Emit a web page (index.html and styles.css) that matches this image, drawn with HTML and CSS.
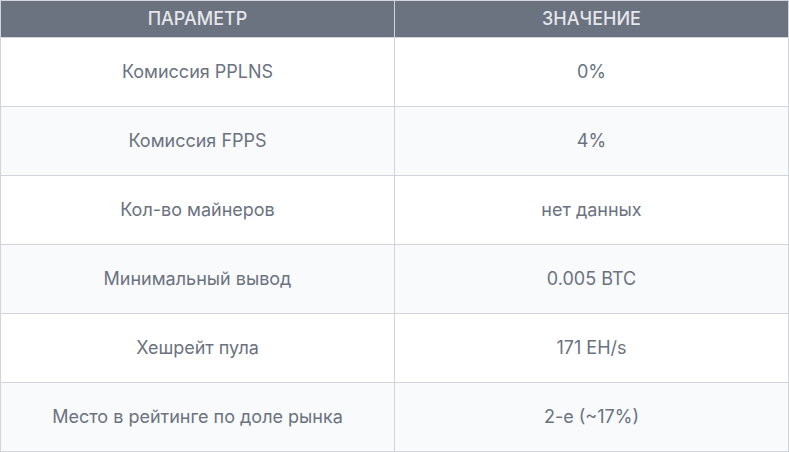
FILE: index.html
```html
<!DOCTYPE html>
<html lang="ru">
<head>
<meta charset="utf-8">
<link rel="stylesheet" href="styles.css">
</head>
<body>
<table class="data">
  <thead>
    <tr><th>Параметр</th><th>Значение</th></tr>
  </thead>
  <tbody>
    <tr><td>Комиссия PPLNS</td><td>0%</td></tr>
    <tr><td>Комиссия FPPS</td><td>4%</td></tr>
    <tr><td>Кол-во майнеров</td><td>нет данных</td></tr>
    <tr><td>Минимальный вывод</td><td>0.005 BTC</td></tr>
    <tr><td>Хешрейт пула</td><td>171 EH/s</td></tr>
    <tr><td>Место в рейтинге по доле рынка</td><td>2-е (~17%)</td></tr>
  </tbody>
</table>
</body>
</html>
```
FILE: styles.css
```css
html, body {
  margin: 0;
  padding: 0;
  background: #ffffff;
}
body {
  font-family: Inter, "Noto Sans", sans-serif;
}
.data {
  width: 789px;
  border-collapse: collapse;
  table-layout: fixed;
}
.data th, .data td {
  border: 1px solid #d1d5db;
  text-align: center;
}
.data th {
  background: #6b7280;
  color: #e5e7eb;
  font-size: 18px;
  font-weight: 500;
  text-transform: uppercase;
  line-height: 20px;
  padding: 8px 16px;
}
.data td {
  color: #6b7280;
  font-size: 18px;
  line-height: 24px;
  padding: 22px 16px;
}
.data tbody tr:nth-child(even) td {
  background: #f9fafb;
}
```
